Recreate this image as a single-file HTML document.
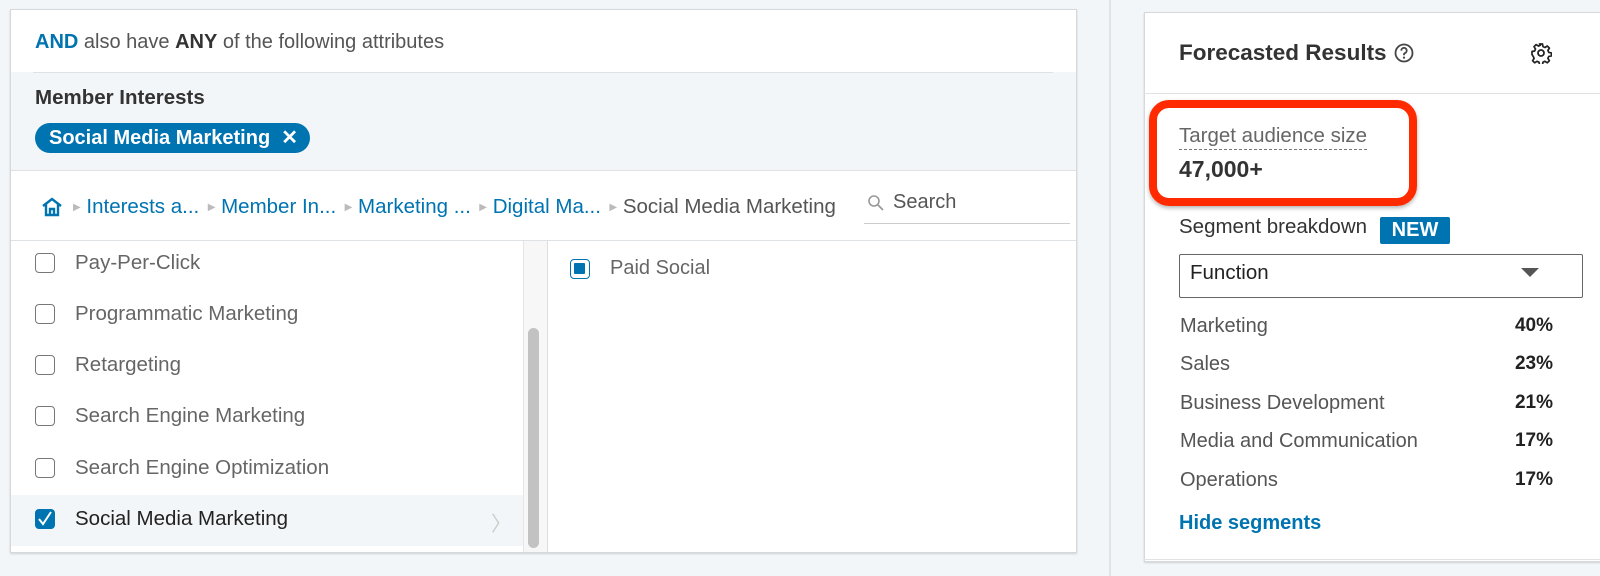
<!DOCTYPE html>
<html><head><meta charset="utf-8"><style>
body{margin:0;width:1600px;height:576px;background:#f3f6f8;font-family:"Liberation Sans",sans-serif;position:relative;overflow:hidden;color:#555}
.a{position:absolute}
.card{position:absolute;background:#fff;border:1px solid #d6d9dc;box-shadow:0 1px 2px rgba(0,0,0,.15)}
.blue{color:#0073b1}
.row{position:absolute;left:0;width:512px;height:51px;font-size:20.5px;color:#666}
.row .cb{position:absolute;left:24px;top:14px;width:20px;height:20px;border:1.5px solid #777;border-radius:4px;box-sizing:border-box}
.row span{position:absolute;left:64px;top:12px}
.seg{position:absolute;left:1180px;width:373px;font-size:20px;color:#555}
.seg b{position:absolute;right:0;color:#222;font-size:19px}
.ar{color:#bbb;font-size:10px;vertical-align:3px}
</style></head><body>
<div class="card" style="left:10px;top:9px;width:1065px;height:542px">
 <div class="a" style="left:24px;top:21px;font-size:20px;color:#555"><b class="blue">AND</b> also have <b style="color:#333">ANY</b> of the following attributes</div>
 <div class="a" style="left:0;top:62px;width:1065px;height:98px;background:#f3f6f8;border-bottom:1px solid #dfe2e4"></div>
 <div class="a" style="left:22px;top:62px;width:1020px;height:1px;background:#dfe2e4"></div>
 <div class="a" style="left:24px;top:76px;font-size:20.5px;color:#333;font-weight:bold">Member Interests</div>
 <div class="a" style="left:24px;top:113px;height:30px;padding:0 12px 0 14px;border-radius:15px;background:#0073b1;color:#fff;font-size:20px;font-weight:bold;line-height:30px">Social Media Marketing &nbsp;✕</div>
 <svg class="a" style="left:30px;top:187px" width="22" height="20" viewBox="0 0 22 20"><path d="M2 9 L11 2 L20 9 M5 7 V18 H17 V7 M9 18 V12 H13 V18" fill="none" stroke="#0073b1" stroke-width="2.4"/></svg>
 <div class="a" style="left:62px;top:185px;font-size:20.5px;white-space:nowrap"><span class="ar">▶</span> <span class="blue">Interests a...</span> <span class="ar">&nbsp;▶</span> <span class="blue">Member In...</span> <span class="ar">&nbsp;▶</span> <span class="blue">Marketing ...</span> <span class="ar">&nbsp;▶</span> <span class="blue">Digital Ma...</span> <span class="ar">&nbsp;▶</span> <span style="color:#555">Social Media Marketing</span></div>
 <svg class="a" style="left:856px;top:184px" width="18" height="18" viewBox="0 0 18 18"><circle cx="7" cy="7" r="5" fill="none" stroke="#999" stroke-width="1.6"/><path d="M11 11 L16 16" stroke="#999" stroke-width="1.8"/></svg>
 <div class="a" style="left:882px;top:181px;font-size:20px;color:#555">Search</div>
 <div class="a" style="left:853px;top:213px;width:206px;height:1px;background:#ccc"></div>
 <div class="a" style="left:0;top:230px;width:1065px;height:1px;background:#dfe2e4"></div>
 <div class="a" style="left:0;top:231px;width:512px;height:311px">
  <div class="row" style="top:-2px"><div class="cb"></div><span>Pay-Per-Click</span></div>
  <div class="row" style="top:49px"><div class="cb"></div><span>Programmatic Marketing</span></div>
  <div class="row" style="top:100px"><div class="cb"></div><span>Retargeting</span></div>
  <div class="row" style="top:151px"><div class="cb"></div><span>Search Engine Marketing</span></div>
  <div class="row" style="top:203px"><div class="cb"></div><span>Search Engine Optimization</span></div>
  <div class="row" style="top:254px;background:#f3f6f8;color:#222"><div class="cb" style="background:#0073b1;border-color:#0073b1"><svg width="20" height="20" style="position:absolute;left:-1px;top:-1px"><path d="M4 10 L8 15 L16 3" fill="none" stroke="#fff" stroke-width="2"/></svg></div><span>Social Media Marketing</span><span style="left:480px;color:#ccc">〉</span></div>
 </div>
 <div class="a" style="left:512px;top:231px;width:23px;height:311px;background:#f7f7f7;border-left:1px solid #e6e6e6;border-right:1px solid #ddd"></div>
 <div class="a" style="left:517px;top:318px;width:11px;height:220px;background:#c2c2c2;border-radius:6px"></div>
 <div class="a" style="left:559px;top:249px;width:20px;height:20px;border:1.5px solid #0073b1;border-radius:4px;box-sizing:border-box"><div style="position:absolute;left:3px;top:3px;width:11px;height:11px;background:#0073b1;border-radius:1px"></div></div>
 <div class="a" style="left:599px;top:247px;font-size:20px;color:#666">Paid Social</div>
</div>
<div class="a" style="left:1109px;top:0;width:2px;height:576px;background:#e0e2e4"></div>
<div class="card" style="left:1144px;top:12px;width:470px;height:548px;border-right:none"></div>
<div class="a" style="left:1144px;top:93px;width:456px;height:1px;background:#e0e2e4"></div>
<div class="a" style="left:1144px;top:559px;width:456px;height:1px;background:#e0e2e4"></div>
<div class="a" style="left:1179px;top:40px;font-size:22.5px;font-weight:bold;color:#333">Forecasted Results</div>
<svg class="a" style="left:1393px;top:42px" width="22" height="22" viewBox="0 0 22 22"><circle cx="11" cy="11" r="8.5" fill="none" stroke="#444" stroke-width="1.8"/><path d="M8.3 8.6a2.7 2.7 0 1 1 3.6 2.5c-.6.3-.9.7-.9 1.3v.8" fill="none" stroke="#444" stroke-width="1.8"/><circle cx="11" cy="15.6" r="1.1" fill="#444"/></svg>
<svg class="a" style="left:1530px;top:42px" width="22" height="22" viewBox="0 0 22 22"><circle cx="11" cy="11" r="3" fill="none" stroke="#222" stroke-width="1.8"/><path d="M9.5 2h3l.5 2.6 2 .9 2.3-1.5 2.1 2.1-1.5 2.3.9 2 2.6.5v3l-2.6.5-.9 2 1.5 2.3-2.1 2.1-2.3-1.5-2 .9-.5 2.6h-3l-.5-2.6-2-.9-2.3 1.5-2.1-2.1 1.5-2.3-.9-2L2 12.5v-3l2.6-.5.9-2L4 4.7l2.1-2.1 2.3 1.5 2-.9z" fill="none" stroke="#222" stroke-width="1.7" stroke-linejoin="round"/></svg>
<div class="a" style="left:1149px;top:100px;width:252px;height:90px;border:8px solid #ff2a00;border-radius:20px;box-shadow:0 2px 4px rgba(0,0,0,.3)"></div>
<div class="a" style="left:1179px;top:124px;font-size:20.5px;color:#666;border-bottom:1.5px dashed #777;padding-bottom:1px">Target audience size</div>
<div class="a" style="left:1179px;top:156px;font-size:23px;font-weight:bold;color:#333">47,000+</div>
<div class="a" style="left:1179px;top:215px;font-size:20.5px;color:#333">Segment breakdown</div>
<div class="a" style="left:1380px;top:217px;width:70px;height:27px;background:#0073b1;color:#fff;font-weight:bold;font-size:20px;text-align:center;line-height:27px;border-radius:2px">NEW</div>
<div class="a" style="left:1179px;top:254px;width:402px;height:42px;border:1.5px solid #666;border-radius:2px"></div>
<div class="a" style="left:1190px;top:261px;font-size:20.5px;color:#222">Function</div>
<svg class="a" style="left:1521px;top:268px" width="18" height="10"><path d="M0 0 H18 L9 9z" fill="#555"/></svg>
<div class="seg" style="top:315px">Marketing<b>40%</b></div>
<div class="seg" style="top:353px">Sales<b>23%</b></div>
<div class="seg" style="top:392px">Business Development<b>21%</b></div>
<div class="seg" style="top:430px">Media and Communication<b>17%</b></div>
<div class="seg" style="top:469px">Operations<b>17%</b></div>
<div class="a blue" style="left:1179px;top:512px;font-size:20px;font-weight:bold">Hide segments</div>
</body></html>
